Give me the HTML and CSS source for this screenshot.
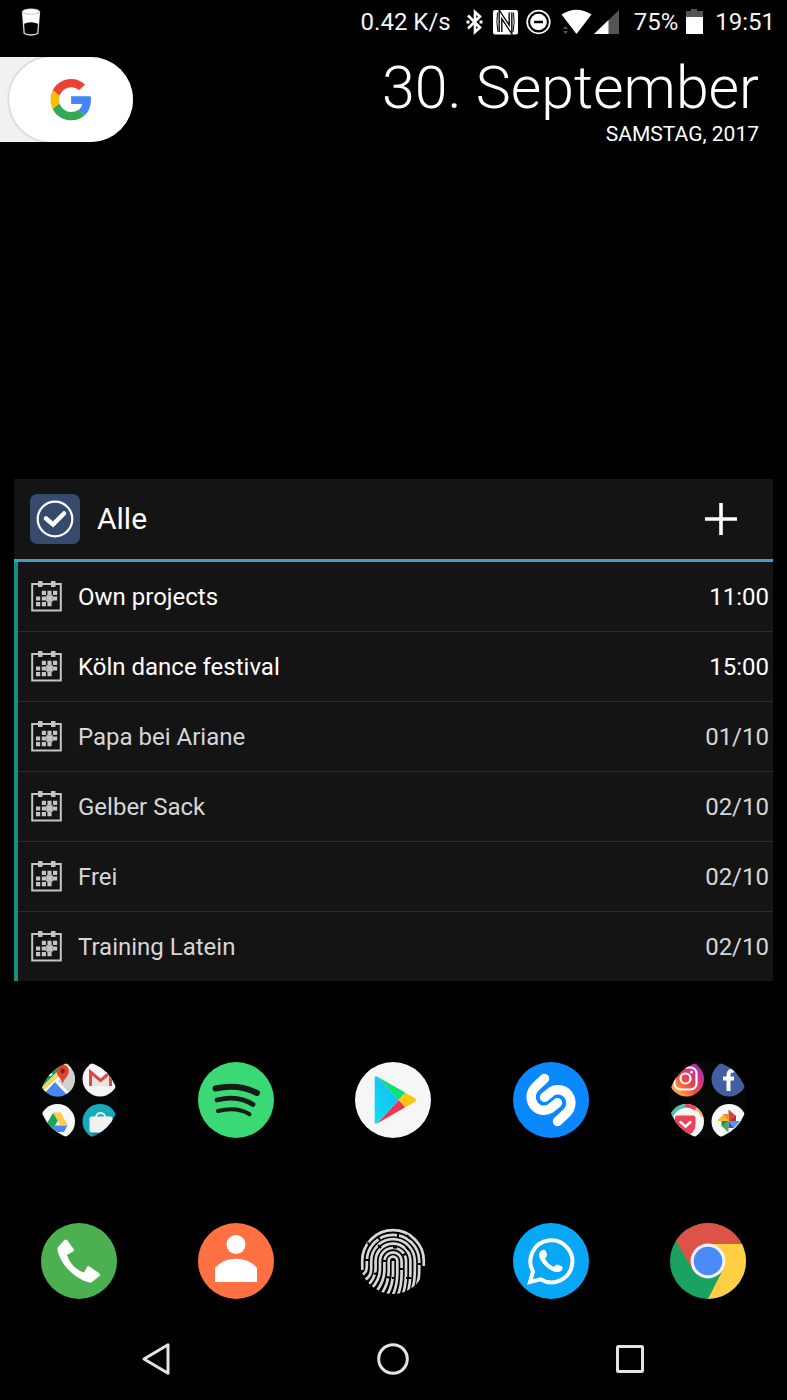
FILE: index.html
```
<!DOCTYPE html>
<html lang="de">
<head>
    <meta charset="UTF-8">
    <meta name="viewport" content="width=device-width, initial-scale=1.0">
    <title>Homescreen</title>
    <link rel="stylesheet" href="styles.css">
</head>
<body>
    <svg class="defs" aria-hidden="true">
        <defs>
            <symbol id="calendar" viewBox="0 0 31 31">
                <path d="M1.200 3H29.800V29.500H1.200Z" fill="none" stroke="#c4c4c4" stroke-width="2"/>
                <path d="M7 0h4.500v6H7zM20 0h4.500v6H20zM10.800 9.800h4.200v4.200h-4.200zM16.400 9.800h4.200v4.200h-4.200zM22 9.800h4.200v4.200H22zM5 15.400h4.200v4.200H5zM10.800 15.400h4.200v4.200h-4.200zM22 15.400h4.200v4.200H22zM5 21h4.200v4.200H5zM10.800 21h4.200v4.200h-4.200zM16.400 21h4.200v4.200h-4.200z" fill="#c4c4c4"/>
                <rect x="15.200" y="14.200" width="6.600" height="6.600" fill="#c4c4c4"/>
            </symbol>
            <clipPath id="folder"><circle r="39"/></clipPath>
            <clipPath id="disc"><circle r="38"/></clipPath>
            <clipPath id="tl"><circle cx="-21.500" cy="-21" r="17.500"/></clipPath>
            <clipPath id="tr"><circle cx="21" cy="-21" r="17.500"/></clipPath>
            <clipPath id="bl"><circle cx="-21.500" cy="21.500" r="17.500"/></clipPath>
            <clipPath id="br"><circle cx="21" cy="21.500" r="17.500"/></clipPath>
            <clipPath id="print"><circle r="33"/></clipPath>
            <linearGradient id="insta" x1="0" y1="1" x2="1" y2="0">
                <stop offset="0.1" stop-color="#fdc04d"/>
                <stop offset="0.45" stop-color="#ee4b3f"/>
                <stop offset="0.75" stop-color="#c0309b"/>
                <stop offset="1" stop-color="#7a3cc0"/>
            </linearGradient>
            <linearGradient id="play-blue" x1="1" y1="0" x2="0" y2="1">
                <stop offset="0" stop-color="#12b5f5"/>
                <stop offset="1" stop-color="#10dff0"/>
            </linearGradient>
        </defs>
    </svg>

    <header class="status">
        <svg class="drink" width="20" height="28" viewBox="0 0 20 28" aria-hidden="true">
            <path d="M1.500 3.500 3.200 25.500Q10 28.500 16.800 25.500L18.500 3.500" fill="none" stroke="#ddd" stroke-width="1.300"/>
            <path d="M1.500 3.500 2.500 16Q10 12.500 17.500 16L18.500 3.500Z" fill="#fff"/>
            <ellipse cx="10" cy="3.500" rx="8.700" ry="2.800" fill="#fff" stroke="#999" stroke-width="0.600"/>
        </svg>
        <span>0.42 K/s</span>
        <svg class="bluetooth" width="18" height="26" viewBox="0 0 18 26" aria-label="Bluetooth">
            <path d="M2 6.500 14 18.500 9 23V3L14 7.500 2 19.500" fill="none" stroke="#fff" stroke-width="2.600"/>
            <path d="M0.500 11.500h3v3h-3zM13.500 11.500h3v3h-3z" fill="#fff"/>
        </svg>
        <svg class="nfc" width="25" height="26" viewBox="0 0 25 26" aria-label="NFC">
            <rect y="1" width="25" height="24.500" rx="2" fill="#fff"/>
            <path d="M7.500 23V5.500L17.500 20.500V3.500" fill="none" stroke="#000" stroke-width="4"/>
            <path d="M7.500 23V5.500L17.500 20.500V3.500" fill="none" stroke="#fff" stroke-width="1.300"/>
            <path d="M20.500 3.500Q22 13 20 23M4.500 3.500Q3 13 5 23" fill="none" stroke="#000" stroke-width="1"/>
        </svg>
        <svg class="dnd" width="25" height="26" viewBox="0 0 25 26" aria-label="Nicht stören">
            <circle cx="12.500" cy="13" r="11.300" fill="none" stroke="#fff" stroke-width="1.700"/>
            <circle cx="12.500" cy="13" r="8.300" fill="#fff"/>
            <path d="M8 13h9" stroke="#000" stroke-width="2.500"/>
        </svg>
        <svg class="wifi" width="31" height="26" viewBox="0 0 31 26" aria-label="WLAN">
            <path d="M0.500 5.500Q15.500-4 30.500 5.500L15.500 25Z" fill="#fff"/>
            <path d="M2 20l2.500-3L7 20zM2 22l2.500 3L7 22z" fill="#555"/>
        </svg>
        <svg class="signal" width="25" height="26" viewBox="0 0 25 26" aria-label="Mobilfunk">
            <path d="M25 1V25H0Z" fill="#555"/>
            <path d="M14.500 11V25H0Z" fill="#fff"/>
        </svg>
        <span class="percent">75%</span>
        <svg class="battery" width="17" height="26" viewBox="0 0 17 26" aria-hidden="true">
            <path d="M5 0h6v2h6v6H0V2h5z" fill="#555"/>
            <path d="M0 8H17V25H0Z" fill="#fff"/>
        </svg>
        <time>19:51</time>
    </header>

    <section class="top">
        <div class="search">
            <button class="google" aria-label="Google Suche">
                <svg width="42" height="42" viewBox="3 3 42 42">
                    <g transform="translate(3.500 3) scale(.86)">
                        <path fill="#ea4335" d="M24 9.500c3.540 0 6.710 1.220 9.210 3.600l6.850-6.850C35.900 2.380 30.470 0 24 0 14.620 0 6.510 5.380 2.560 13.220l7.980 6.190C12.430 13.720 17.740 9.500 24 9.500z"/>
                        <path fill="#4285f4" d="M46.980 24.550c0-1.570-.15-3.090-.38-4.550H24v9.020h12.940c-.58 2.960-2.260 5.480-4.780 7.180l7.730 6c4.510-4.180 7.090-10.360 7.090-17.650z"/>
                        <path fill="#fbbc05" d="M10.530 28.590c-.48-1.450-.76-2.990-.76-4.590s.27-3.140.76-4.590l-7.980-6.190C.92 16.460 0 20.120 0 24c0 3.880.92 7.540 2.560 10.780l7.970-6.190z"/>
                        <path fill="#34a853" d="M24 48c6.480 0 11.930-2.130 15.890-5.810l-7.730-6c-2.150 1.450-4.920 2.300-8.160 2.300-6.260 0-11.570-4.220-13.470-9.910l-7.980 6.190C6.510 42.620 14.620 48 24 48z"/>
                    </g>
                </svg>
            </button>
        </div>
        <div class="date">
            <h1>30. September</h1>
            <p>SAMSTAG, 2017</p>
        </div>
    </section>

    <main class="widget">
        <div class="widget-head">
            <svg width="50" height="50" viewBox="0 0 50 50" aria-hidden="true">
                <rect width="50" height="50" rx="7" fill="#364a6e"/>
                <circle cx="25" cy="25" r="17.300" fill="none" stroke="#fff" stroke-width="2.200"/>
                <path d="M16 24.500 23 30.500 34 19.500" fill="none" stroke="#fff" stroke-width="4.500" stroke-linecap="round"/>
            </svg>
            <h2>Alle</h2>
            <button class="add" aria-label="Hinzufügen">
                <svg width="32" height="32" viewBox="0 0 32 32"><path d="M16 0V32M0 16H32" stroke="#fff" stroke-width="3.600"/></svg>
            </button>
        </div>
        <ul>
            <li class="today"><svg class="cal" aria-hidden="true"><use href="#calendar"/></svg><span>Own projects</span><time>11:00</time></li>
            <li class="today"><svg class="cal" aria-hidden="true"><use href="#calendar"/></svg><span>Köln dance festival</span><time>15:00</time></li>
            <li><svg class="cal" aria-hidden="true"><use href="#calendar"/></svg><span>Papa bei Ariane</span><time>01/10</time></li>
            <li><svg class="cal" aria-hidden="true"><use href="#calendar"/></svg><span>Gelber Sack</span><time>02/10</time></li>
            <li><svg class="cal" aria-hidden="true"><use href="#calendar"/></svg><span>Frei</span><time>02/10</time></li>
            <li><svg class="cal" aria-hidden="true"><use href="#calendar"/></svg><span>Training Latein</span><time>02/10</time></li>
        </ul>
    </main>

    <section class="apps">
        <!-- Google folder -->
        <button aria-label="Ordner Google">
            <svg viewBox="-40 -40 80 80">
                <circle r="39.500" fill="#060606"/>
                <g clip-path="url(#folder)">
                    <g clip-path="url(#tl)">
                        <rect x="-40" y="-40" width="37" height="37" fill="#1f9d58"/>
                        <path d="M-24-19 0-44V0H-8Z" fill="#d0d0d0"/>
                        <path d="M-40-5-7-38" stroke="#fff" stroke-width="7"/>
                        <path d="M-41-6-8-39" stroke="#fcd44f" stroke-width="4"/>
                        <path d="M-23-19-7 0H-41Z" fill="#4a86f0"/>
                        <path d="M-23-19-5 0" stroke="#fff" stroke-width="3"/>
                        <path d="M-33-27a4 4 0 0 0 6 1" fill="none" stroke="#fff" stroke-width="2"/>
                        <path d="M-16.300-16C-17-21-22.500-24-22.500-29a6.200 6.200 0 0 1 12.400 0C-10.100-24-15.600-21-16.300-16Z" fill="#db4437"/>
                        <circle cx="-16.300" cy="-29" r="2.200" fill="#75231d"/>
                    </g>
                    <g clip-path="url(#tr)">
                        <rect x="3" y="-39" width="36" height="36" fill="#f5f5f5"/>
                        <path d="M11-28H32V-14H11Z" fill="#e5e5e5"/>
                        <path d="M13-28 21.500-20 30-28Z" fill="#fafafa"/>
                        <path d="M11.500-14V-28L21.500-19.500 31.500-28V-14" fill="none" stroke="#d94a40" stroke-width="3"/>
                    </g>
                    <g clip-path="url(#bl)">
                        <rect x="-40" y="3" width="37" height="37" fill="#f8f8f8"/>
                        <path d="M-26 13-33 25-28 32-20 19Z" fill="#1da462"/>
                        <path d="M-26 12.500H-18L-11.500 25H-19Z" fill="#fdce45"/>
                        <path d="M-24 25.500H-11.500L-15 32H-28Z" fill="#4688f4"/>
                    </g>
                    <g clip-path="url(#br)">
                        <rect x="3" y="3" width="37" height="37" fill="#16aabd"/>
                        <path d="M33 18 40 25V40H17L12 33Z" fill="#078da0"/>
                        <rect x="10.500" y="16.500" width="23" height="16" rx="2" fill="#f1f1f1"/>
                        <path d="M17 17a4.500 4 0 0 1 9 0" fill="none" stroke="#f1f1f1" stroke-width="2"/>
                    </g>
                </g>
            </svg>
        </button>
        <button aria-label="Spotify">
            <svg viewBox="-40 -40 80 80">
                <circle r="38" fill="#3bd975"/>
                <g fill="none" stroke="#151b15" stroke-linecap="round">
                    <path d="M-20.500-11.500Q2-16.500 21-7" stroke-width="6"/>
                    <path d="M-19 0Q2-5.500 17 4.500" stroke-width="4.800"/>
                    <path d="M-18 11Q1 6.500 13.500 14.300" stroke-width="4"/>
                </g>
            </svg>
        </button>
        <button aria-label="Play Store">
            <svg viewBox="-40 -40 80 80">
                <circle r="38" fill="#f6f6f6"/>
                <path d="M-16-23.500 12.300-7.500 5.700 0Z" fill="#0de07a"/>
                <path d="M-16 23.500 12.300 7.300 5.700 0Z" fill="#f3344d"/>
                <path d="M12.300-7.300 22.500-1.500Q24.500 0 22.500 1.500L12.300 7.300 5.700 0Z" fill="#fec60f"/>
                <path d="M-18.300-22Q-18.300-25-15.500-23L5.700 0-15.500 23Q-18.300 25-18.300 22Z" fill="url(#play-blue)"/>
            </svg>
        </button>
        <button aria-label="Shazam">
            <svg viewBox="-40 -40 80 80">
                <circle r="38" fill="#0a88ff"/>
                <g fill="none" stroke="#fff" stroke-width="9.500" stroke-linecap="round">
                    <path d="M-6.500-21.500-15.500-13C-21-7.500-21 0-17 5.500C-12 11.500-4.500 11-.5 8.500L6.500 2.800"/>
                    <path d="M6.500 21.500 15.500 13C21 7.500 21 0 17-5.500C12-11.500 4.500-11 .5-8.500L-6.500-2.800"/>
                </g>
            </svg>
        </button>
        <!-- Social folder -->
        <button aria-label="Ordner Social">
            <svg viewBox="-40 -40 80 80">
                <circle r="39.500" fill="#060606"/>
                <g clip-path="url(#folder)">
                    <g clip-path="url(#tl)">
                        <rect x="-39" y="-39" width="35" height="36" fill="url(#insta)"/>
                        <rect x="-33.500" y="-32.500" width="22" height="22" rx="6" fill="none" stroke="#fff" stroke-width="2.200"/>
                        <circle cx="-22.500" cy="-21.500" r="5" fill="none" stroke="#fff" stroke-width="2.200"/>
                        <circle cx="-16.500" cy="-28" r="1.500" fill="#fff"/>
                    </g>
                    <g clip-path="url(#tr)">
                        <rect x="3" y="-39" width="36" height="36" fill="#435f9f"/>
                        <path d="M20.500-9V-25Q20.500-30 26.500-29.500M15-21.500H26" fill="none" stroke="#fff" stroke-width="4"/>
                    </g>
                    <g clip-path="url(#bl)">
                        <rect x="-40" y="3" width="37" height="37" fill="#f6f6f6"/>
                        <path d="M-38 17Q-33 6-23 5.500" fill="none" stroke="#49c3ae" stroke-width="5"/>
                        <path d="M-23 5.500Q-16 5.500-12 9" fill="none" stroke="#ee4056" stroke-width="4"/>
                        <path d="M-12 9Q-8 11-6 17" fill="none" stroke="#f5b44c" stroke-width="2"/>
                        <path d="M-33 18Q-33 15.500-30.500 15.500H-15Q-12.500 15.500-12.500 18V24C-12.500 39-33 39-33 24Z" fill="#ee4056"/>
                        <path d="M-27.500 22-22.500 26.500-17.500 22" fill="none" stroke="#fff" stroke-width="2.500" stroke-linecap="round"/>
                    </g>
                    <g clip-path="url(#br)">
                        <rect x="3" y="3" width="37" height="37" fill="#f8f8f8"/>
                        <path d="M20.500 9.500 28 16 20.500 21Z" fill="#db4437"/>
                        <path d="M28 15.500V21H20.500Z" fill="#b5332a"/>
                        <path d="M9 21 15.500 14 20.500 21Z" fill="#fbbd27"/>
                        <path d="M15 14H20.500V21Z" fill="#ef8b35"/>
                        <path d="M20.500 32.500 13.500 26 20.500 21Z" fill="#4aae50"/>
                        <path d="M13.500 26.500V21H20.500Z" fill="#1b8e4b"/>
                        <path d="M32 21 26 28 20.500 21Z" fill="#5494f5"/>
                        <path d="M26 28H20.500V21Z" fill="#2a5bc4"/>
                    </g>
                </g>
            </svg>
        </button>

        <button aria-label="Telefon">
            <svg viewBox="-40 -40 80 80">
                <circle r="38" fill="#4caf50"/>
                <path d="M-14.500-21Q-12.500-22-11.500-20.500L-5-11.500Q-4.500-10-6-9.500L-12-6C-9 2.500-3 9 5 11.500L8 6Q9 4.500 10.500 5.500L20.500 12.500Q21.800 13.500 20.500 15L13 21Q12 22 10 21.500C-6 17-19 2-21.500-11Q-21.800-13-20.500-14.500Z" fill="#fff"/>
            </svg>
        </button>
        <button aria-label="Kontakte">
            <svg viewBox="-40 -40 80 80">
                <circle r="38" fill="#ff7043"/>
                <circle cy="-16.500" r="9.500" fill="#fff"/>
                <path d="M-21 21V7C-11-5.500 11-5.500 21 7V21Z" fill="#fff"/>
            </svg>
        </button>
        <button aria-label="Fingerabdruck">
            <svg viewBox="-40 -40 80 80">
                <g clip-path="url(#print)">
                    <g fill="none" stroke="#d8d8d8" stroke-width="2.700">
                        <path d="M0 0V12C0 20-2 28-7 36"/>
                        <path d="M-12 34C-6 25-4.300 18-4.300 10V0A4.300 4.300 0 0 1 4.300 0V12C4.300 20 3 28-1 36"/>
                        <path d="M-17 31C-10 22-8.600 16-8.600 9V0A8.600 8.600 0 0 1 8.600 0V12C8.600 20 8 28 4 36"/>
                        <path d="M-22 28C-14 20-13 14-13 8V0A13 13 0 0 1 13 0V12C13 20 12 28 9 36"/>
                        <path d="M-26 25C-18 18-17.400 12-17.400 7V0A17.400 17.400 0 0 1 17.400 0V12C17.400 20 17 25 14 34"/>
                        <path d="M-30 20C-22 16-21.800 11-21.800 6V0A21.800 21.800 0 0 1 21.800 0V12C21.800 18 21 23 19 30"/>
                        <path d="M-33 15C-26.500 12-26.200 9-26.200 5V0A26.200 26.200 0 0 1 26.200 0V12C26.200 17 25 20 24 24"/>
                        <path d="M-30.800 9V0A30.800 30.800 0 0 1 30.800 0V5"/>
                    </g>
                    <path d="M-25.500-18.500l3 3M-15-16l3 3M5-28v4M14-26l3 4M13-14l4 4M0-13.500h4M-24-1h-4M-11 0h4M-19 13l4-1M-6 16l4 1M6.500 8h4M13 17h5M24 3h4.500M-15-24l2 3M-1 17h2M10-6l3-1" stroke="#000" stroke-width="2"/>
                </g>
            </svg>
        </button>
        <button aria-label="WhatsApp">
            <svg viewBox="-40 -40 80 80">
                <circle r="38" fill="#08a8f7"/>
                <path d="M-21 21-18 10.500A21 21 0 1 1-10.500 18.300Z" fill="none" stroke="#fff" stroke-width="4"/>
                <path d="M-8.500-11Q-6-12-5-9.500L-4-6.500Q-3.500-5-6-2.500C-4 1.500-.5 4.500 3 6Q5 3 6.500 3.500L11 5.500Q12.500 7 10.500 9.500C6 13.500-1 9-4.500 6C-9 2-14-5-11-9Q-10-11-8.500-11Z" fill="#fff"/>
            </svg>
        </button>
        <button aria-label="Chrome">
            <svg viewBox="-40 -40 80 80">
                <g clip-path="url(#disc)">
                    <rect x="-40" y="-40" width="80" height="80" fill="#1aa260"/>
                    <path d="M0-17.300H40V40H-1.100L15 8.700Z" fill="#ffce44"/>
                    <path d="M-40-33V-40H40V-17.300H0L-15 8.700Z" fill="#de5347"/>
                </g>
                <circle r="17.400" fill="#f1f1f6"/>
                <circle r="14.300" fill="#4c8bf5"/>
            </svg>
        </button>
    </section>

    <nav>
        <button aria-label="Zurück">
            <svg viewBox="0 0 36 36"><path d="M5 18 29 3.800V32.200Z" fill="none" stroke="#e4e4e4" stroke-width="3" stroke-linejoin="round"/></svg>
        </button>
        <button aria-label="Home">
            <svg viewBox="0 0 36 36"><circle cx="18" cy="18" r="14.300" fill="none" stroke="#e4e4e4" stroke-width="3"/></svg>
        </button>
        <button aria-label="Übersicht">
            <svg viewBox="0 0 36 36"><rect x="5.500" y="5.500" width="25" height="25" rx="1" fill="none" stroke="#e4e4e4" stroke-width="3"/></svg>
        </button>
    </nav>
</body>
</html>
```
FILE: styles.css
```
* { box-sizing: border-box; }
body { font-family: Roboto, "Liberation Sans", sans-serif; margin: 0; background-color: #000; color: #fff; min-height: 100vh; display: flex; flex-direction: column; }
h1, h2, p, ul { margin: 0; padding: 0; font-weight: 400; }
button { background: none; border: none; padding: 0; color: inherit; cursor: pointer; display: flex; align-items: center; justify-content: center; }
svg { display: block; flex: none; }
.defs { position: absolute; width: 0; height: 0; }

.status { display: flex; align-items: center; height: 43px; padding: 0 12px 0 21px; font-size: 24px; line-height: 28px; color: #f4f4f4; }
.drink { margin-right: auto; }
.bluetooth { margin-left: 15px; }
.nfc { margin-left: 9px; }
.dnd { margin-left: 8px; }
.wifi { margin-left: 10px; }
.signal { margin-left: 2px; }
.percent { margin-left: 15px; }
.battery { margin-left: 8px; }
.status time { margin-left: 12px; }

.top { display: flex; justify-content: space-between; align-items: flex-start; padding: 14px 28px 0 0; }
.search { background-color: #f1f1f1; border-radius: 0 43px 43px 0; padding-left: 9px; }
.google { width: 124px; height: 85px; border-radius: 43px; background-color: #fff; box-shadow: 0 0 3px rgba(0,0,0,0.3); }
.date { text-align: right; }
.date h1 { font-size: 59px; line-height: 61px; font-weight: 300; }
.date p { font-size: 21px; line-height: 32px; }

.widget { margin: auto 14px 0; background-color: #141414; }
.widget-head { display: flex; align-items: center; gap: 17px; height: 83px; padding: 0 36px 0 16px; border-bottom: 3px solid #3aa0c8; }
.widget-head h2 { font-size: 30px; line-height: 36px; }
.add { margin-left: auto; }
.widget ul { list-style: none; border-left: 4px solid #16917c; }
.widget li { display: flex; align-items: center; gap: 16px; height: 70px; padding: 0 4px 0 13px; font-size: 24px; line-height: 32px; color: #d6d6d6; border-bottom: 1px solid #2b2b2b; }
.widget li:last-child { height: 69px; border-bottom: none; }
.widget li.today { color: #fff; }
.widget li time { margin-left: auto; }
.cal { width: 31px; height: 31px; }

.apps { display: grid; grid-template-columns: repeat(5, 1fr); row-gap: 81px; padding: 79px 0 16px; }
.apps svg { width: 80px; height: 80px; }

nav { display: grid; grid-template-columns: repeat(3, 1fr); padding: 0 5%; }
nav button { height: 83px; }
nav svg { width: 36px; height: 36px; }
```
